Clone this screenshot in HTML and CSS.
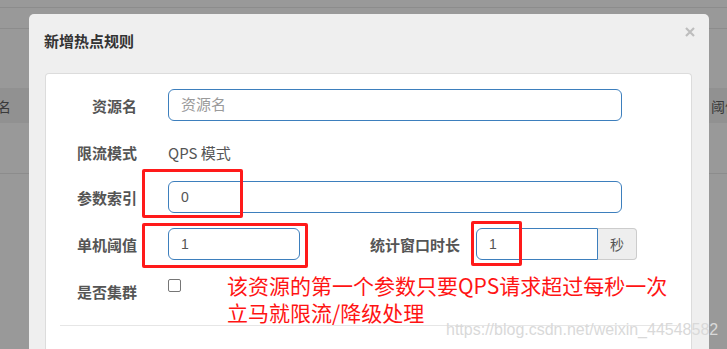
FILE: index.html
```html
<!DOCTYPE html>
<html lang="zh-CN">
<head>
<meta charset="utf-8">
<title>新增热点规则</title>
<link rel="stylesheet" href="styles.css">
</head>
<body>
<div class="page">
  <div class="bg-top"></div>
  <div class="bg-nav"></div>
  <div class="bg-gap"></div>
  <div class="bg-thead">
    <span class="bg-cell-left">名</span>
    <span class="bg-cell-right">阈值</span>
  </div>
  <div class="bg-row"></div>
</div>

<div class="modal">
  <div class="modal-header">
    <h4 class="modal-title">新增热点规则</h4>
    <button class="close" type="button" aria-label="关闭">
      <svg width="10" height="10" viewBox="0 0 10 10"><path d="M1 1L9 9M9 1L1 9" stroke="#bdbdbd" stroke-width="2.2" fill="none"/></svg>
    </button>
  </div>
  <div class="panel">
    <div class="row">
      <label class="label">资源名</label>
      <input class="input input-wide" type="text" placeholder="资源名">
    </div>
    <div class="row row-static">
      <label class="label">限流模式</label>
      <span class="static">QPS 模式</span>
    </div>
    <div class="row">
      <label class="label">参数索引</label>
      <input class="input input-wide" type="text" value="0">
    </div>
    <div class="row">
      <label class="label">单机阈值</label>
      <input class="input input-short" type="text" value="1">
      <label class="label label-mid">统计窗口时长</label>
      <div class="input-group">
        <input class="input input-group-field" type="text" value="1">
        <span class="addon">秒</span>
      </div>
    </div>
    <div class="row row-check">
      <label class="label">是否集群</label>
      <span class="checkbox"></span>
    </div>
    <div class="divider"></div>
  </div>
</div>

<div class="mark mark-1"></div>
<div class="mark mark-2"></div>
<div class="mark mark-3"></div>
<div class="note">该资源的第一个参数只要QPS请求超过每秒一次<br>立马就限流/降级处理</div>
<div class="watermark">https://blog.csdn.net/weixin_44548582</div>
</body>
</html>
```

FILE: styles.css
```css
html, body {
  margin: 0;
  padding: 0;
}
body {
  width: 727px;
  height: 349px;
  overflow: hidden;
  background: #999999;
  font-family: "Noto Sans CJK SC", "Liberation Sans", sans-serif;
  position: relative;
}

/* dimmed page behind the dialog */
.page {
  display: flex;
  flex-direction: column;
}
.bg-top {
  height: 7px;
  border-bottom: 1px solid #8c8c8c;
}
.bg-nav {
  height: 20px;
  border-bottom: 1px solid #8c8c8c;
}
.bg-gap {
  height: 59px;
}
.bg-thead {
  height: 35px;
  background: #919191;
  display: flex;
  justify-content: space-between;
  align-items: center;
  color: #3a3a3a;
  font-size: 14px;
  overflow: hidden;
}
.bg-cell-left {
  margin-left: -3px;
  margin-top: 1px;
}
.bg-cell-right {
  margin-right: -12px;
  margin-top: 1px;
}
.bg-row {
  height: 50px;
  border-bottom: 1px solid #8c8c8c;
}

/* dialog */
.modal {
  position: absolute;
  left: 29px;
  top: 14px;
  width: 680px;
  height: 335px;
  background: #efefef;
  border-radius: 5px 5px 0 0;
  overflow: hidden;
}
.modal-header {
  position: relative;
  padding: 17px 15px 0;
  height: 42px;
}
.modal-title {
  margin: 0;
  font-size: 15px;
  line-height: 20px;
  font-weight: 700;
  color: #333;
}
.close {
  position: absolute;
  top: 13px;
  right: 14px;
  width: 10px;
  height: 10px;
  padding: 0;
  border: 0;
  background: none;
  display: flex;
}
.panel {
  margin: 0 17px 0 16px;
  background: #fff;
  border: 1px solid #dcdcdc;
  border-bottom: 0;
  border-radius: 4px 4px 0 0;
  padding-top: 15px;
  height: 261px;
}
.row {
  display: flex;
  align-items: flex-start;
  margin-bottom: 15px;
}
.row-static {
  height: 30px;
}
.row-check {
  height: 35px;
}
.label {
  width: 91px;
  margin-right: 31px;
  text-align: right;
  font-size: 15px;
  line-height: 20px;
  padding-top: 7px;
  font-weight: 700;
  color: #555;
  flex: none;
}
.label-mid {
  width: 160px;
  margin-right: 16px;
}
.static {
  padding-top: 7px;
  font-size: 15px;
  line-height: 20px;
  color: #555;
}
.input {
  box-sizing: border-box;
  height: 32px;
  border: 1px solid #3d7fbd;
  border-radius: 6px;
  padding: 0 12px;
  font-family: "Liberation Sans", "Noto Sans CJK SC", sans-serif;
  font-size: 14px;
  color: #555;
  background: #fff;
  outline: none;
}
.input::placeholder {
  color: #9a9a9a;
  font-family: "Noto Sans CJK SC", sans-serif;
  font-size: 15px;
}
.input-wide {
  width: 454px;
}
.input-short {
  width: 132px;
}
.input-group {
  display: flex;
}
.input-group-field {
  width: 122px;
  border-radius: 6px 0 0 6px;
}
.addon {
  box-sizing: border-box;
  width: 39px;
  height: 32px;
  background: #eee;
  border: 1px solid #ccc;
  border-left: 0;
  border-radius: 0 4px 4px 0;
  display: flex;
  align-items: center;
  justify-content: center;
  font-size: 14px;
  color: #555;
}
.checkbox {
  box-sizing: border-box;
  width: 13px;
  height: 13px;
  margin-top: 4px;
  border: 1px solid #767676;
  border-radius: 2px;
  background: #fff;
}
.divider {
  margin: 0 14px;
  border-top: 1px solid #e6e6e6;
}

/* red annotations drawn over the screenshot */
.mark {
  position: absolute;
  box-sizing: border-box;
  border: 3px solid #ff1a1a;
  border-radius: 2px;
}
.mark-1 {
  left: 142px;
  top: 169px;
  width: 101px;
  height: 49px;
}
.mark-2 {
  left: 142px;
  top: 223px;
  width: 166px;
  height: 45px;
}
.mark-3 {
  left: 471px;
  top: 221px;
  width: 51px;
  height: 45px;
}
.note {
  position: absolute;
  left: 227px;
  top: 272px;
  font-size: 21px;
  line-height: 27px;
  color: #ff1414;
  white-space: nowrap;
}
.watermark {
  position: absolute;
  left: 446px;
  top: 320px;
  font-family: "Liberation Sans", sans-serif;
  font-size: 16px;
  line-height: 20px;
  color: #d9d9d9;
  white-space: nowrap;
}
```
